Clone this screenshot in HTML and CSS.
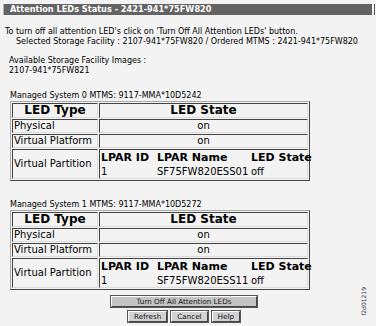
FILE: index.html
```html
<!DOCTYPE html>
<html>
<head>
<meta charset="utf-8">
<link rel="stylesheet" href="styles.css">
</head>
<body>
<div class="page">
  <div class="titlebar">Attention LEDs Status - 2421-941*75FW820</div>
  <p class="intro">To turn off all attention LED's click on 'Turn Off All Attention LEDs' button.</p>
  <p class="selected">Selected Storage Facility : 2107-941*75FW820 / Ordered MTMS : 2421-941*75FW820</p>
  <p class="avail">Available Storage Facility Images :<br>2107-941*75FW821</p>

  <p class="ms">Managed System 0 MTMS: 9117-MMA*10D5242</p>
  <table class="led">
    <tr><th class="c1">LED Type</th><th>LED State</th></tr>
    <tr><td>Physical</td><td class="ctr">on</td></tr>
    <tr><td>Virtual Platform</td><td class="ctr">on</td></tr>
    <tr><td class="vp">Virtual Partition</td><td class="inner">
      <table class="lpar">
        <colgroup><col class="k1"><col class="k2"><col></colgroup>
        <tr><th>LPAR ID</th><th>LPAR Name</th><th>LED State</th></tr>
        <tr><td>1</td><td>SF75FW820ESS01</td><td>off</td></tr>
      </table>
    </td></tr>
  </table>

  <p class="ms ms2">Managed System 1 MTMS: 9117-MMA*10D5272</p>
  <table class="led">
    <tr><th class="c1">LED Type</th><th>LED State</th></tr>
    <tr><td>Physical</td><td class="ctr">on</td></tr>
    <tr><td>Virtual Platform</td><td class="ctr">on</td></tr>
    <tr><td class="vp">Virtual Partition</td><td class="inner">
      <table class="lpar">
        <colgroup><col class="k1"><col class="k2"><col></colgroup>
        <tr><th>LPAR ID</th><th>LPAR Name</th><th>LED State</th></tr>
        <tr><td>1</td><td>SF75FW820ESS11</td><td>off</td></tr>
      </table>
    </td></tr>
  </table>

  <div class="actions">
    <button class="btn wide">Turn Off All Attention LEDs</button>
    <div class="row">
      <button class="btn">Refresh</button>
      <button class="btn">Cancel</button>
      <button class="btn">Help</button>
    </div>
  </div>
  <span class="figid">f2d01219</span>
</div>
</body>
</html>
```
FILE: styles.css
```css
html, body {
  margin: 0;
  padding: 0;
  background: #f3f3f3;
}
.page {
  position: relative;
  width: 376px;
  height: 326px;
  padding-top: 4px;
  box-sizing: border-box;
  font-family: "DejaVu Sans", sans-serif;
  font-size: 8px;
  color: #000;
  overflow: hidden;
}
.titlebar {
  margin: 0 4px 0 3px;
  height: 11px;
  line-height: 11px;
  background: #636363;
  border-left: 1px solid #b5b5b5;
  color: #fff;
  font-family: "DejaVu Sans Condensed", "DejaVu Sans", sans-serif;
  font-weight: bold;
  font-size: 9.1px;
  padding-left: 6px;
  box-shadow: 2px 0 0 #f3f3f3, 3px 0 0 #555;
}
p { margin: 0; line-height: 10px; }
.intro {
  margin-top: 12px;
  padding-left: 5px;
}
.selected {
  padding-left: 16px;
  white-space: nowrap;
}
.avail {
  margin-top: 9px;
  padding-left: 9px;
}
.ms {
  margin-top: 15px;
  padding-left: 10px;
}
.ms2 { margin-top: 19px; }
table.led {
  margin-left: 10px;
  width: 300px;
  border-collapse: separate;
  border-spacing: 1px;
  border: 1px solid;
  border-color: #aaa #444 #444 #aaa;
  font-family: "DejaVu Sans", sans-serif;
  font-size: 10px;
}
table.led > tbody > tr > th,
table.led > tbody > tr > td {
  border: 1px solid;
  border-color: #444 #ddd #ddd #444;
  padding: 0 1px;
  line-height: 12px;
  white-space: nowrap;
}
table.led > tbody > tr > th {
  font-size: 12px;
  font-weight: bold;
  text-align: center;
  line-height: 13px;
}
table.led th.c1 { width: 82px; }
.ctr { text-align: center; }
td.inner { padding: 0 !important; }
table.lpar {
  border-collapse: collapse;
  width: 100%;
  table-layout: fixed;
  font-size: 10px;
}
table.lpar col.k1 { width: 56px; }
table.lpar col.k2 { width: 94px; }
table.lpar th, table.lpar td {
  padding: 1px 0 0 1px;
  line-height: 13px;
  text-align: left;
  white-space: nowrap;
}
table.lpar th { font-size: 11px; font-weight: bold; }
.actions {
  display: flex;
  flex-direction: column;
  align-items: center;
  gap: 4px;
  margin-top: 6px;
  margin-right: 8px;
}
.row { display: flex; gap: 4px; }
.btn {
  font-family: "DejaVu Sans", sans-serif;
  font-size: 7.2px;
  line-height: 7px;
  padding: 1px 5px;
  background: #d2d2d2;
  border: 1px solid;
  border-color: #fff #444 #444 #fff;
  outline: 1px solid #555;
  color: #111;
}
.btn.wide { width: 146px; background: #c4c4c4; }
.figid {
  position: absolute;
  left: 361px;
  top: 287px;
  font-size: 6px;
  line-height: 6px;
  writing-mode: vertical-rl;
  transform: rotate(180deg);
  color: #333;
}
```
